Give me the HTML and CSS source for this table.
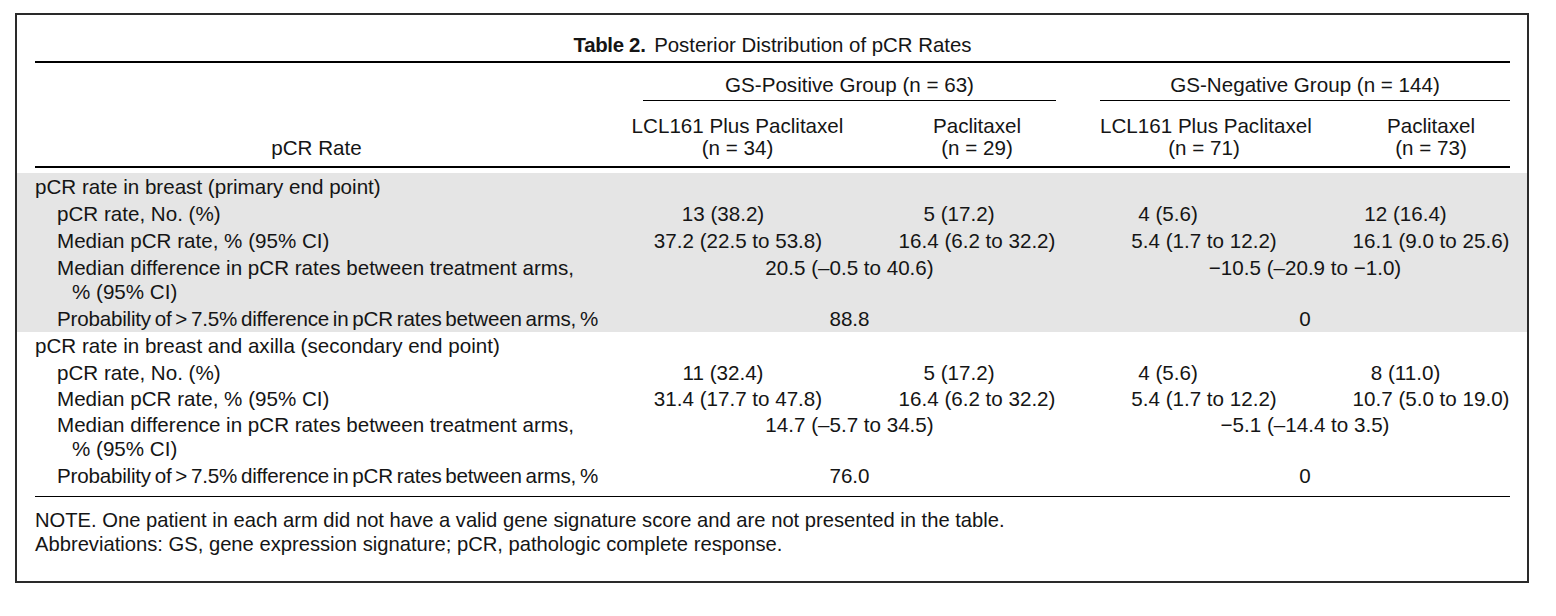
FILE: index.html
```html
<!DOCTYPE html>
<html lang="en">
<head>
<meta charset="utf-8">
<title>Table 2. Posterior Distribution of pCR Rates</title>
<link rel="stylesheet" href="styles.css">
</head>
<body>
<div class="frame">
  <div class="title"><b>Table 2.</b> Posterior Distribution of pCR Rates</div>
  <table class="tbl">
    <colgroup>
      <col class="c0"><col class="c1"><col class="c2"><col class="c3"><col class="c4">
    </colgroup>
    <thead>
      <tr class="grp">
        <th class="rowhead" rowspan="2">pCR Rate</th>
        <th class="g1" colspan="2"><div class="uline">GS-Positive Group (n = 63)</div></th>
        <th class="g2" colspan="2"><div class="uline">GS-Negative Group (n = 144)</div></th>
      </tr>
      <tr class="arms">
        <th>LCL161 Plus Paclitaxel<br>(n = 34)</th>
        <th>Paclitaxel<br>(n = 29)</th>
        <th>LCL161 Plus Paclitaxel<br>(n = 71)</th>
        <th class="last">Paclitaxel<br>(n = 73)</th>
      </tr>
    </thead>
    <tbody class="gap"><tr><td colspan="5"></td></tr></tbody>
    <tbody class="shaded">
      <tr class="sec"><td colspan="5">pCR rate in breast (primary end point)</td></tr>
      <tr class="cnt">
        <td class="lbl">pCR rate, No. (%)</td>
        <td>13 (38.2)</td><td>5 (17.2)</td><td>4 (5.6)</td><td>12 (16.4)</td>
      </tr>
      <tr class="med">
        <td class="lbl">Median pCR rate, % (95% CI)</td>
        <td>37.2 (22.5 to 53.8)</td><td>16.4 (6.2 to 32.2)</td><td>5.4 (1.7 to 12.2)</td><td>16.1 (9.0 to 25.6)</td>
      </tr>
      <tr class="diff">
        <td class="lbl wrap">Median difference in pCR rates between treatment arms, % (95% CI)</td>
        <td colspan="2">20.5 (–0.5 to 40.6)</td><td colspan="2" class="r">−10.5 (–20.9 to −1.0)</td>
      </tr>
      <tr class="prob">
        <td class="lbl tight">Probability of &gt; 7.5% difference in pCR rates between arms, %</td>
        <td colspan="2">88.8</td><td colspan="2" class="r">0</td>
      </tr>
    </tbody>
    <tbody class="plain">
      <tr class="sec"><td colspan="5">pCR rate in breast and axilla (secondary end point)</td></tr>
      <tr class="cnt">
        <td class="lbl">pCR rate, No. (%)</td>
        <td>11 (32.4)</td><td>5 (17.2)</td><td>4 (5.6)</td><td>8 (11.0)</td>
      </tr>
      <tr class="med">
        <td class="lbl">Median pCR rate, % (95% CI)</td>
        <td>31.4 (17.7 to 47.8)</td><td>16.4 (6.2 to 32.2)</td><td>5.4 (1.7 to 12.2)</td><td>10.7 (5.0 to 19.0)</td>
      </tr>
      <tr class="diff">
        <td class="lbl wrap">Median difference in pCR rates between treatment arms, % (95% CI)</td>
        <td colspan="2">14.7 (–5.7 to 34.5)</td><td colspan="2" class="r">−5.1 (–14.4 to 3.5)</td>
      </tr>
      <tr class="prob">
        <td class="lbl tight">Probability of &gt; 7.5% difference in pCR rates between arms, %</td>
        <td colspan="2">76.0</td><td colspan="2" class="r">0</td>
      </tr>
    </tbody>
  </table>
  <div class="notes">
    <p>NOTE. One patient in each arm did not have a valid gene signature score and are not presented in the table.</p>
    <p>Abbreviations: GS, gene expression signature; pCR, pathologic complete response.</p>
  </div>
</div>
</body>
</html>
```

FILE: styles.css
```css
* { box-sizing: border-box; }

body {
  margin: 0;
  background: #ffffff;
  color: #151515;
  font-family: "Liberation Sans", Arial, sans-serif;
}

.frame {
  margin: 13px 0 0 15px;
  width: 1514px;
  height: 570px;
  border: 2px solid #2a2a2a;
  padding: 0 17px 0 18px;
}

.title {
  text-align: center;
  font-size: 20.4px;
  line-height: 24px;
  padding: 18px 0 4px;
  border-bottom: 2px solid #000;
}
.title b { font-weight: bold; margin-right: 3px; letter-spacing: -0.3px; }

.tbl {
  width: 100%;
  table-layout: fixed;
  border-collapse: separate;
  border-spacing: 0;
  font-size: 20.6px;
  line-height: 24px;
}

.c0 { width: 586px; }
.c1 { width: 255px; }
.c2 { width: 202px; }
.c3 { width: 252px; }
.c4 { width: 180px; }

th { font-weight: normal; }
th, td { padding: 0 22px; white-space: nowrap; text-align: center; }
th:first-child, td:first-child { padding-left: 0; }

/* header */
.grp th { padding-top: 10px; vertical-align: top; }
.grp .g2 { padding-right: 0; }
.uline { border-bottom: 1px solid #000; padding-bottom: 3px; }
.grp .rowhead {
  vertical-align: bottom;
  padding: 0 23px 7px 0;
  line-height: 22px;
  border-bottom: 2px solid #000;
}
.arms th {
  line-height: 22px;
  padding-top: 14px;
  padding-bottom: 7px;
  border-bottom: 2px solid #000;
}
.arms th.last { padding-right: 0; }

.gap td { height: 5px; padding: 0; }

/* body */
tbody td { padding-top: 1.5px; padding-bottom: 1.5px; }
tbody tr td:last-child { padding-right: 0; }
.sec td { text-align: left; padding-left: 0; }
td.lbl { text-align: left; padding-left: 22px; }
td.wrap { white-space: normal; padding-left: 37px; text-indent: -15px; padding-right: 32px; }
td.tight { word-spacing: -1.7px; letter-spacing: -0.2px; padding-right: 0; }
.diff td { vertical-align: top; }

.plain .med td { padding-top: 0.5px; padding-bottom: 0.5px; }

.shaded td { background: #e5e5e5; }
.shaded td:first-child { box-shadow: -18px 0 0 #e5e5e5; }
.shaded td:last-child { box-shadow: 17px 0 0 #e5e5e5; }
.shaded .sec td { box-shadow: -18px 0 0 #e5e5e5, 17px 0 0 #e5e5e5; }

/* fine positioning of the count values */
.cnt td:nth-child(2) { padding-right: 73px; }
.cnt td:nth-child(3) { padding-right: 58px; }
.cnt td:nth-child(4) { padding-right: 94px; }
.cnt td:nth-child(5) { padding-right: 51px; }
.med td:nth-child(2) { padding-right: 43px; }

.notes {
  margin-top: 7px;
  border-top: 1px solid #000;
  padding-top: 11px;
  font-size: 20.2px;
  line-height: 24px;
}
.notes p { margin: 0; }
```
